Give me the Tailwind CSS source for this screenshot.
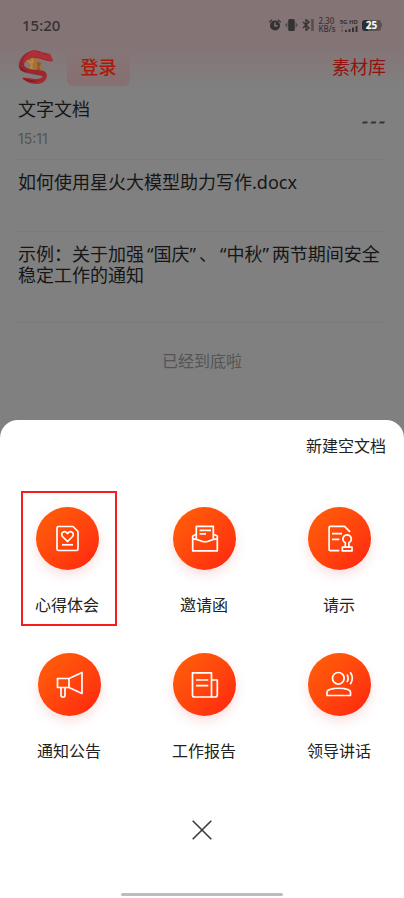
<!DOCTYPE html>
<html lang="zh-CN">
<head>
<meta charset="utf-8">
<meta name="viewport" content="width=device-width, initial-scale=1">
<title>文字文档</title>
<script src="https://cdn.jsdelivr.net/npm/@tailwindcss/browser@4"></script>
</head>
<body class="flex min-h-screen flex-col bg-[#808080] font-['Noto_Sans','Noto_Sans_CJK_SC',sans-serif] text-[#161616]">
<div class="bg-linear-to-b from-[#847476] from-50% to-[#808080]">
  <div class="flex h-12 items-center justify-between pl-[22px] pr-[22px] pt-[2px] text-[#353232]">
    <span class="text-[15px] font-medium leading-5">15:20</span>
    <div class="flex items-center gap-1">
      <svg class="h-3 w-3" viewBox="0 0 12 12" fill="none" stroke="currentColor" stroke-linecap="round"><circle cx="6" cy="6.5" r="5" fill="currentColor" stroke="none"/><path d="M.8 2.8 2.6 1.2M11.2 2.8 9.4 1.2" stroke-width="1.4"/><path d="M6 3.8v3h2.2" stroke="#918284" stroke-width="1.2"/></svg>
      <svg class="h-3 w-[13px]" viewBox="0 0 13 12" fill="currentColor"><rect x="3.2" y="0" width="6.6" height="12" rx="1.6"/><path d="M2.4 3v6L0 6zM10.6 3v6L13 6z" opacity=".6"/></svg>
      <svg class="h-3 w-3" viewBox="0 0 12 12" fill="none" stroke="currentColor"><path d="M1 3l6 6-3 2.4V.6L7 3 1 9" stroke-width="1.3"/><path d="M10.5 0v12" stroke-width="2.6" opacity=".55"/></svg>
      <div class="flex flex-col text-[8px] font-medium leading-[8px]"><span>2.30</span><span>KB/s</span></div>
      <div class="flex flex-col gap-[1px] text-[6px] font-bold leading-[6px]"><span>5G HD</span>
        <svg class="h-[6px] w-[18px]" viewBox="0 0 18 6" fill="currentColor"><path d="M0 0h4L2 2zM1 3h2v3H1z" opacity=".3"/><path d="M5 4h2v2H5zM8.500 3h2v3h-2zM12 1.500h2V6h-2zM15.500 0h2v6h-2z"/></svg>
      </div>
      <div class="flex items-center">
        <span class="flex h-[11px] w-[19px] items-center justify-center rounded-[3px] bg-linear-to-r from-[#2e2c2c] from-30% to-[#565152] to-30% text-[10px] font-bold leading-[11px] text-white">25</span>
        <span class="h-1 w-[1px] rounded-r bg-[#565152]"></span>
      </div>
    </div>
  </div>
  <header class="flex items-center pl-[18px] pr-[18px] pb-1">
    <svg class="h-9 w-9" viewBox="0 0 36 36" role="img" aria-label="标志">
      <path d="M13 5l2-2 3 4 1 4 4 2 2 8-1 6-8-3-7-3 3-5-5-6 5 1z" fill="#a5713a"/>
      <path d="M14 7l2 5-2 6 5 5-8-2 2-5-5-5 5 1z" fill="#b98545"/>
      <path d="M19 13l4 1-2 4 3 7-6-3 2-4z" fill="#8d552c"/>
      <path d="M35 12l-3-7-5-1-10-3C9 2 3 7 1 14c-1 6 2 9 8 10l15 3c3 1 2 4-1 6 7-2 7-9 3-11-4-1-12-1-17-3-5-2-3-7 2-9 7-4 17 4 24 2z" fill="#99282e"/>
      <path d="M17 1l4 3 3-1 3 3 5-1 3 7c-7-1-11-3-18-4-6 0-10 3-12 7 0-6 4-12 12-14z" fill="#ad3036"/>
      <path d="M1 15c1 4 4 6 9 7-3 1-6 0-8-2z" fill="#781f26"/>
      <path d="M4 29c6-1 10 1 14 1 5 0 8-3 10-6 2 5-1 11-10 11-6 0-11-3-14-6z" fill="#a6292f"/>
      <path d="M4 29c7 1 11 4 18 2-5 3-13 3-18-2z" fill="#7b2027"/>
    </svg>
    <button class="ml-[13px] h-[38px] w-[63px] rounded-md bg-linear-to-b from-[#857577] to-[#876f70] text-lg font-medium text-[#a91a0b]">登录</button>
    <a href="#" class="ml-auto text-lg text-[#92120f]">素材库</a>
  </header>
</div>
<main class="flex-1 px-[18px] text-lg leading-[21px]">
  <section class="flex h-[70px] items-center justify-between border-b border-[#7a7a7c] pb-1">
    <div>
      <h2 class="leading-7">文字文档</h2>
      <p class="pt-1 font-['Inter',sans-serif] text-sm leading-6 text-[#555]">15:11</p>
    </div>
    <button aria-label="更多" class="p-0 pr-px"><svg class="h-[3px] w-[23px]" viewBox="0 0 23 3" fill="#333"><path d="M1 .5h5l-1 2H0zM9.500 .5h5l-1 2h-5zM18 .5h5l-1 2h-5z"/></svg></button>
  </section>
  <h2 class="h-[72px] border-b border-[#7a7a7c] pt-3">如何使用星火大模型助力写作.docx</h2>
  <h2 class="h-[91px] border-b border-[#7a7a7c] pt-3">示例：关于加强<span class="px-[3px]">“国庆”</span>、<span class="px-[3px]">“中秋”</span>两节期间安全稳定工作的通知</h2>
  <p class="py-7 text-center text-base leading-[21px] text-[#555]">已经到底啦</p>
</main>
<section role="dialog" aria-label="新建文档" class="flex flex-col rounded-t-[18px] bg-white pb-[2px] pt-[14px] text-base leading-6 text-[#222]">
  <a href="#" class="mr-[18px] self-end">新建空文档</a>
  <div class="mt-[33px] grid grid-cols-[96px_96px_96px] justify-between gap-y-[11px] pl-[21px] pr-[17px]">
    <button class="flex flex-col items-center border-2 border-[#f51d1d] pb-[7px] pr-1 pt-[14px]">
      <span class="rounded-full bg-linear-to-br from-[#ff6008] to-[#ff1e10] shadow-[0_5px_12px_#e0303028]"><svg class="h-[63px] w-[63px]" viewBox="0 0 63 63" fill="none" stroke="white" stroke-width="1.7" stroke-linejoin="round"><path d="M22.500 19.500H37l5 5v17.500q0 1.500-1.500 1.500h-18q-1.500 0-1.500-1.500V21q0-1.500 1.500-1.500z"/><path d="M31.500 34.500l-5-5c-2.500-3 1.500-7 5-3 3.500-4 7.500 0 5 3z"/><path d="M26 37.800h11"/></svg></span>
      <span class="mt-[23px]">心得体会</span>
    </button>
    <button class="flex flex-col items-center border-2 border-transparent pb-[7px] pt-[14px]">
      <span class="rounded-full bg-linear-to-br from-[#ff6008] to-[#ff1e10] shadow-[0_5px_12px_#e0303028]"><svg class="h-[63px] w-[63px]" viewBox="0 0 63 63" fill="none" stroke="white" stroke-width="1.700" stroke-linejoin="round"><path d="M23.300 33V19.300h17V33"/><path d="M26.500 23.300H38M26.500 26.800H33"/><path d="M23 27.500l-3.300 1.500v14.800h24.600v-14.800L41 27.500"/><path d="M19.700 31.800c7 0 7 3 12.300 3s5.300-3 12.300-3"/></svg></span>
      <span class="mt-[23px]">邀请函</span>
    </button>
    <button class="flex flex-col items-center border-2 border-transparent pb-[7px] pt-[14px]">
      <span class="rounded-full bg-linear-to-br from-[#ff6008] to-[#ff1e10] shadow-[0_5px_12px_#e0303028]"><svg class="h-[63px] w-[63px]" viewBox="0 0 63 63" fill="none" stroke="white" stroke-width="1.700" stroke-linejoin="round"><path d="M31.300 43.600h-9q-1.200 0-1.200-1.200V20.500q0-1.200 1.200-1.200H36.500l5.600 5.600"/><path d="M24 26.700h10M24 32.300h7.300"/><path d="M37.300 40v-4.200a4.200 4.200 0 1 1 3.600 0V40M34.300 40.200h9.700v3.700H34.300z"/></svg></span>
      <span class="mt-[23px]">请示</span>
    </button>
    <button class="flex flex-col items-center border-2 border-transparent pb-[7px] pt-[14px]">
      <span class="rounded-full bg-linear-to-br from-[#ff6008] to-[#ff1e10] shadow-[0_5px_12px_#e0303028]"><svg class="h-[63px] w-[63px]" viewBox="0 0 63 63" fill="none" stroke="white" stroke-width="1.700" stroke-linejoin="round"><path d="M19.500 25.500h11.500v9H19.500zM31 25.500l13-6v21l-13-6"/><path d="M23 34.500V42q0 2.200 2 2.200t2-2.200v-7.500"/></svg></span>
      <span class="mt-[23px]">通知公告</span>
    </button>
    <button class="flex flex-col items-center border-2 border-transparent pb-[7px] pt-[14px]">
      <span class="rounded-full bg-linear-to-br from-[#ff6008] to-[#ff1e10] shadow-[0_5px_12px_#e0303028]"><svg class="h-[63px] w-[63px]" viewBox="0 0 63 63" fill="none" stroke="white" stroke-width="1.700" stroke-linejoin="round"><path d="M38.500 44V19.800H19.500V42q0 2 2 2H42q2.300 0 2.300-2V27h-5.800"/><path d="M23 27h12.300M23 32.700h12.300"/></svg></span>
      <span class="mt-[23px]">工作报告</span>
    </button>
    <button class="flex flex-col items-center border-2 border-transparent pb-[7px] pt-[14px]">
      <span class="rounded-full bg-linear-to-br from-[#ff6008] to-[#ff1e10] shadow-[0_5px_12px_#e0303028]"><svg class="h-[63px] w-[63px]" viewBox="0 0 63 63" fill="none" stroke="white" stroke-width="1.700" stroke-linejoin="round"><circle cx="30.300" cy="25.300" r="5.800"/><path d="M19 42.500v-3.500c0-5 23.500-5 23.500 0v3.500z"/><path d="M39 21.500q2.300 3.800 0 7.600M42.300 19.300q4 6 0 12"/></svg></span>
      <span class="mt-[23px]">领导讲话</span>
    </button>
  </div>
  <button aria-label="关闭" class="mt-12 self-center"><svg class="h-5 w-5" viewBox="0 0 20 20" stroke="#3c3c3c" stroke-width="1.600"><path d="M.7.700l18.600 18.600M19.300.700L.7 19.300"/></svg></button>
  <div class="mt-[53px] h-[3px] w-2/5 self-center rounded-full bg-[#bcbcbc]"></div>
</section>
</body>
</html>
